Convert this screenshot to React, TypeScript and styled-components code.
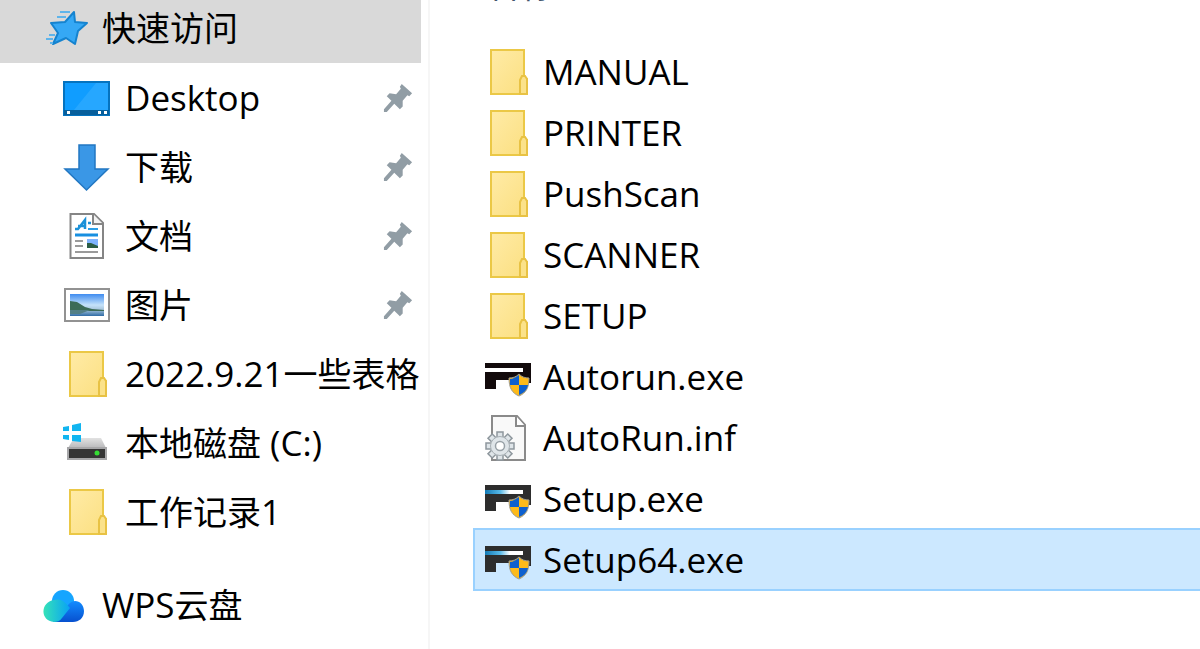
import React from 'react';
import styled, { createGlobalStyle } from 'styled-components';

const Global = createGlobalStyle`
  * { box-sizing: border-box; }
  body {
    margin: 0;
    background: #fff;
    color: #000;
    font-family: "Open Sans", "Noto Sans CJK SC", sans-serif;
    overflow: hidden;
  }
`;

const Window = styled.div`
  display: flex;
  min-height: 100vh;
  overflow: hidden;
`;

const Sidebar = styled.nav`
  flex: 0 0 430px;
  padding-right: 7px;
  border-right: 2px solid #f6f6f6;
`;

const NavLink = styled.a<{ $root?: boolean; $active?: boolean }>`
  display: flex;
  align-items: center;
  gap: ${(p) => (p.$root ? 14 : 12)}px;
  height: 69px;
  padding-left: ${(p) => (p.$root ? 40 : 60)}px;
  color: inherit;
  text-decoration: none;
  background: ${(p) => (p.$active ? '#d9d9d9' : 'transparent')};
`;

const QuickAccess = styled(NavLink)`
  height: 63px;
  padding-bottom: 7px;
`;

const NavGroup = styled.ul`
  list-style: none;
  margin: 0 0 24px;
  padding: 0;
`;

const Label = styled.span`
  flex: 1;
  font-size: 35px;
  line-height: 48px;
  white-space: nowrap;
`;

const Han = styled.span`
  font-size: 34px;
`;

const PinSlot = styled.span`
  display: flex;
  margin-right: 8px;
`;

const Icon = styled.svg`
  display: block;
  flex: none;
`;

const Main = styled.main`
  flex: 1;
  min-width: 0;
  padding-left: 43px;
`;

const ColumnHeader = styled.div`
  height: 42px;
  margin-top: -36px;
  padding-left: 13px;
  font-size: 34px;
  line-height: 42px;
  color: #43566e;
`;

const FileList = styled.ul`
  list-style: none;
  margin: 0;
  padding: 35px 0 0;
`;

const FileRow = styled.button<{ $selected?: boolean }>`
  display: flex;
  align-items: center;
  gap: 10px;
  width: 100%;
  height: ${(p) => (p.$selected ? 63 : 61)}px;
  margin: ${(p) => (p.$selected ? '-1px 0' : '0')};
  padding: 0 0 0 8px;
  border: solid ${(p) => (p.$selected ? '#99d1ff' : 'transparent')};
  border-width: 2px 0 2px 2px;
  background: ${(p) => (p.$selected ? '#cce8ff' : 'transparent')};
  color: inherit;
  font: inherit;
  text-align: left;
`;

const FolderIcon = () => (
  <Icon width="50" height="52" viewBox="0 0 50 52">
    <defs>
      <linearGradient id="folder" x1="0" y1="0" x2="1" y2="1">
        <stop offset="0" stopColor="#ffeba6" />
        <stop offset="1" stopColor="#fbdf80" />
      </linearGradient>
    </defs>
    <path d="M8 4H41V30L44 33V48H8Z" fill="url(#folder)" stroke="#ebc846" strokeWidth="2" />
    <path d="M37 48V34L39 30H42L44 33V48Z" fill="#fbe28a" stroke="#e8c244" strokeWidth="2" />
  </Icon>
);

const StarIcon = () => (
  <Icon width="48" height="48" viewBox="0 0 48 48">
    <path d="M34 8L35 18L47 19L38 27L35 40L26 34L13 40L18 29L11 19L25 18Z" fill="#35a8f5" stroke="#1583cf" strokeWidth="2" strokeLinejoin="round" />
    <path d="M20 8H30M17 13H26M9 31H15M6 35H13M10 39H13" stroke="#5fb4ea" strokeWidth="2" />
  </Icon>
);

const DesktopIcon = () => (
  <Icon width="53" height="48" viewBox="0 0 53 48">
    <rect x="4" y="8" width="45" height="33" fill="#109dff" stroke="#0573bf" strokeWidth="2" />
    <path d="M14 36L36 9H48V36Z" fill="#35adff" opacity=".6" />
    <rect x="4" y="36" width="45" height="5" fill="#075f9c" />
    <path d="M7 37h3v3H7zM38 37h3v3h-3zM44 37h3v3h-3z" fill="#fff" />
  </Icon>
);

const DownloadIcon = () => (
  <Icon width="53" height="52" viewBox="0 0 53 52">
    <path d="M19 4H35V28H48L26.500 49L5 28H19Z" fill="#3a97e6" stroke="#2277c2" strokeWidth="1.500" />
  </Icon>
);

const DocumentIcon = () => (
  <Icon width="53" height="52" viewBox="0 0 53 52">
    <path d="M10.500 4H34L43 13V48H10.500Z" fill="#fff" stroke="#858585" strokeWidth="2" />
    <path d="M33 4V14H43" fill="#f2f2f2" stroke="#858585" strokeWidth="2" />
    <path d="M15 19H18L25 10V19M18 16H25M28 13H31" fill="none" stroke="#1b91d8" strokeWidth="2.500" />
    <path d="M28 19H38" stroke="#2b9fe8" strokeWidth="2" />
    <path d="M15 25H38" stroke="#178fe0" strokeWidth="3" />
    <path d="M15 31H23M15 36H23M15 42H38" stroke="#9a9a9a" strokeWidth="2" />
    <rect x="27" y="29" width="11" height="9" fill="#7fb4ff" />
    <path d="M27 33L31 33L38 36V38H27Z" fill="#2b5d45" />
  </Icon>
);

const PictureIcon = () => (
  <Icon width="53" height="48" viewBox="0 0 53 48">
    <defs>
      <linearGradient id="sky" x1="0" y1="0" x2="0" y2="1">
        <stop offset="0" stopColor="#3f8cf0" />
        <stop offset=".5" stopColor="#c5e2fa" />
        <stop offset=".7" stopColor="#a9c6dd" />
        <stop offset="1" stopColor="#2f6ba5" />
      </linearGradient>
    </defs>
    <rect x="5" y="8" width="44" height="32" fill="#fff" stroke="#929292" strokeWidth="2" />
    <rect x="10" y="13" width="34" height="22" fill="url(#sky)" />
    <path d="M10 20L17 21L25 26L32 28L44 29V30H10Z" fill="#3c6b57" />
    <path d="M10 29H30L20 33H10Z" fill="#527f86" />
  </Icon>
);

const DriveIcon = () => (
  <Icon width="53" height="52" viewBox="0 0 53 52">
    <defs>
      <linearGradient id="drive-top" x1="0" y1="0" x2="0" y2="1">
        <stop offset="0" stopColor="#e2e2e2" />
        <stop offset="1" stopColor="#b9b9bb" />
      </linearGradient>
    </defs>
    <path d="M14 21H41L46 31H8Z" fill="url(#drive-top)" />
    <rect x="8" y="31" width="38" height="11" fill="#353535" stroke="#a7a7a9" strokeWidth="2" />
    <circle cx="37" cy="36" r="2.500" fill="#35dd35" />
    <path d="M3 10L9 9V14H3ZM12 8L21 6V14H12ZM3 18H9V23L3 22ZM12 18H21V25L12 24Z" fill="#11b5f0" />
  </Icon>
);

const CloudIcon = () => (
  <Icon width="48" height="48" viewBox="0 0 48 48">
    <defs>
      <linearGradient id="cloud-left" x1="0" y1="0" x2="1" y2="0">
        <stop offset="0" stopColor="#35e2b8" />
        <stop offset="1" stopColor="#08a2f4" />
      </linearGradient>
      <linearGradient id="cloud-right" x1="0" y1="0" x2="0" y2="1">
        <stop offset="0" stopColor="#138cff" />
        <stop offset="1" stopColor="#0750cf" />
      </linearGradient>
    </defs>
    <circle cx="23" cy="20" r="11" fill="#16a5ff" />
    <path d="M13 41L28 24C34 16 44 21 44 30C44 37 39 41 33 41Z" fill="url(#cloud-right)" />
    <path d="M14 19C20 17 25 20 30 27L22 37C20 40 17 41 14 41C0 40 0 21 14 19Z" fill="url(#cloud-left)" />
  </Icon>
);

const PinIcon = () => (
  <Icon width="30" height="30" viewBox="0 0 32 32">
    <path d="M20 1L31 11L28 14L26 13L21 19L21 25L18 28L12 22L4 31L1 31L1 28L9 19L4 14L7 11L14 12L19 6L18 4Z" fill="#919da5" />
  </Icon>
);

const PrinterIcon = ({ lit }: { lit?: boolean }) => (
  <Icon width="50" height="52" viewBox="0 0 50 52">
    <defs>
      <linearGradient id="glow">
        <stop offset="0" stopColor="#137ab5" />
        <stop offset=".4" stopColor="#57b9e8" />
        <stop offset=".65" stopColor="#fff" />
      </linearGradient>
    </defs>
    <path d="M2 12H48V32H40V29H13V38H2Z" fill={lit ? '#2d2d2d' : '#120a0b'} />
    <rect x="2" y="17" width="38" height="4" fill={lit ? 'url(#glow)' : '#fff'} />
    <path d="M36 23C39 26 42 27 46 27C46 37 43 42 36 45C29 42 26 37 26 27C30 27 33 26 36 23Z" fill="#fdba1a" stroke="#9d9b91" strokeWidth="1" />
    <path d="M36 24C33 26 30 28 27 28V34H36ZM36 34H45C44 39 41 42 36 44Z" fill="#0d60cf" />
  </Icon>
);

const teeth = [0, 45, 90, 135, 180, 225, 270, 315];

const ConfigIcon = () => (
  <Icon width="50" height="52" viewBox="0 0 50 52">
    <path d="M9 4H34L42 13V48H9Z" fill="#f9f9f9" stroke="#8a8a8a" strokeWidth="2" />
    <path d="M33 4V14H42" fill="#fff" stroke="#8a8a8a" strokeWidth="2" />
    {teeth.map((a) => (
      <rect key={a} x="14" y="20" width="6" height="7" fill="#dfe5e9" stroke="#8e979d" strokeWidth="1.500" transform={`rotate(${a} 17 34)`} />
    ))}
    <circle cx="17" cy="34" r="9.500" fill="#dfe5e9" stroke="#a8b0b5" strokeWidth="1" />
    <circle cx="17" cy="34" r="4.500" fill="#fff" stroke="#98a1a7" strokeWidth="1.500" />
  </Icon>
);

type NavEntry = { icon: React.ReactNode; name: React.ReactNode; id: string; pinned?: boolean };

const navEntries: NavEntry[] = [
  { id: 'desktop', icon: <DesktopIcon />, name: 'Desktop', pinned: true },
  { id: 'downloads', icon: <DownloadIcon />, name: <Han>下载</Han>, pinned: true },
  { id: 'documents', icon: <DocumentIcon />, name: <Han>文档</Han>, pinned: true },
  { id: 'pictures', icon: <PictureIcon />, name: <Han>图片</Han>, pinned: true },
  { id: 'forms', icon: <FolderIcon />, name: <>2022.9.21<Han>一些表格</Han></> },
  { id: 'drive-c', icon: <DriveIcon />, name: <><Han>本地磁盘</Han> (C:)</> },
  { id: 'worklog', icon: <FolderIcon />, name: <><Han>工作记录</Han>1</> },
];

const IconSlot = styled.span`
  display: flex;
  justify-content: center;
  flex: 0 0 53px;
`;

const files = [
  { name: 'MANUAL', icon: <FolderIcon /> },
  { name: 'PRINTER', icon: <FolderIcon /> },
  { name: 'PushScan', icon: <FolderIcon /> },
  { name: 'SCANNER', icon: <FolderIcon /> },
  { name: 'SETUP', icon: <FolderIcon /> },
  { name: 'Autorun.exe', icon: <PrinterIcon /> },
  { name: 'AutoRun.inf', icon: <ConfigIcon /> },
  { name: 'Setup.exe', icon: <PrinterIcon lit /> },
  { name: 'Setup64.exe', icon: <PrinterIcon lit />, selected: true },
];

export default function App() {
  return (
    <>
      <Global />
      <Window>
        <Sidebar>
          <QuickAccess href="#quick" $root $active>
            <StarIcon />
            <Label><Han>快速访问</Han></Label>
          </QuickAccess>
          <NavGroup>
            {navEntries.map((e) => (
              <li key={e.id}>
                <NavLink href={`#${e.id}`}>
                  <IconSlot>{e.icon}</IconSlot>
                  <Label>{e.name}</Label>
                  {e.pinned && <PinSlot><PinIcon /></PinSlot>}
                </NavLink>
              </li>
            ))}
          </NavGroup>
          <NavLink href="#wps" $root>
            <CloudIcon />
            <Label>WPS<Han>云盘</Han></Label>
          </NavLink>
        </Sidebar>
        <Main>
          <ColumnHeader>名称</ColumnHeader>
          <FileList>
            {files.map((f) => (
              <li key={f.name}>
                <FileRow type="button" $selected={f.selected}>
                  {f.icon}
                  <Label>{f.name}</Label>
                </FileRow>
              </li>
            ))}
          </FileList>
        </Main>
      </Window>
    </>
  );
}
